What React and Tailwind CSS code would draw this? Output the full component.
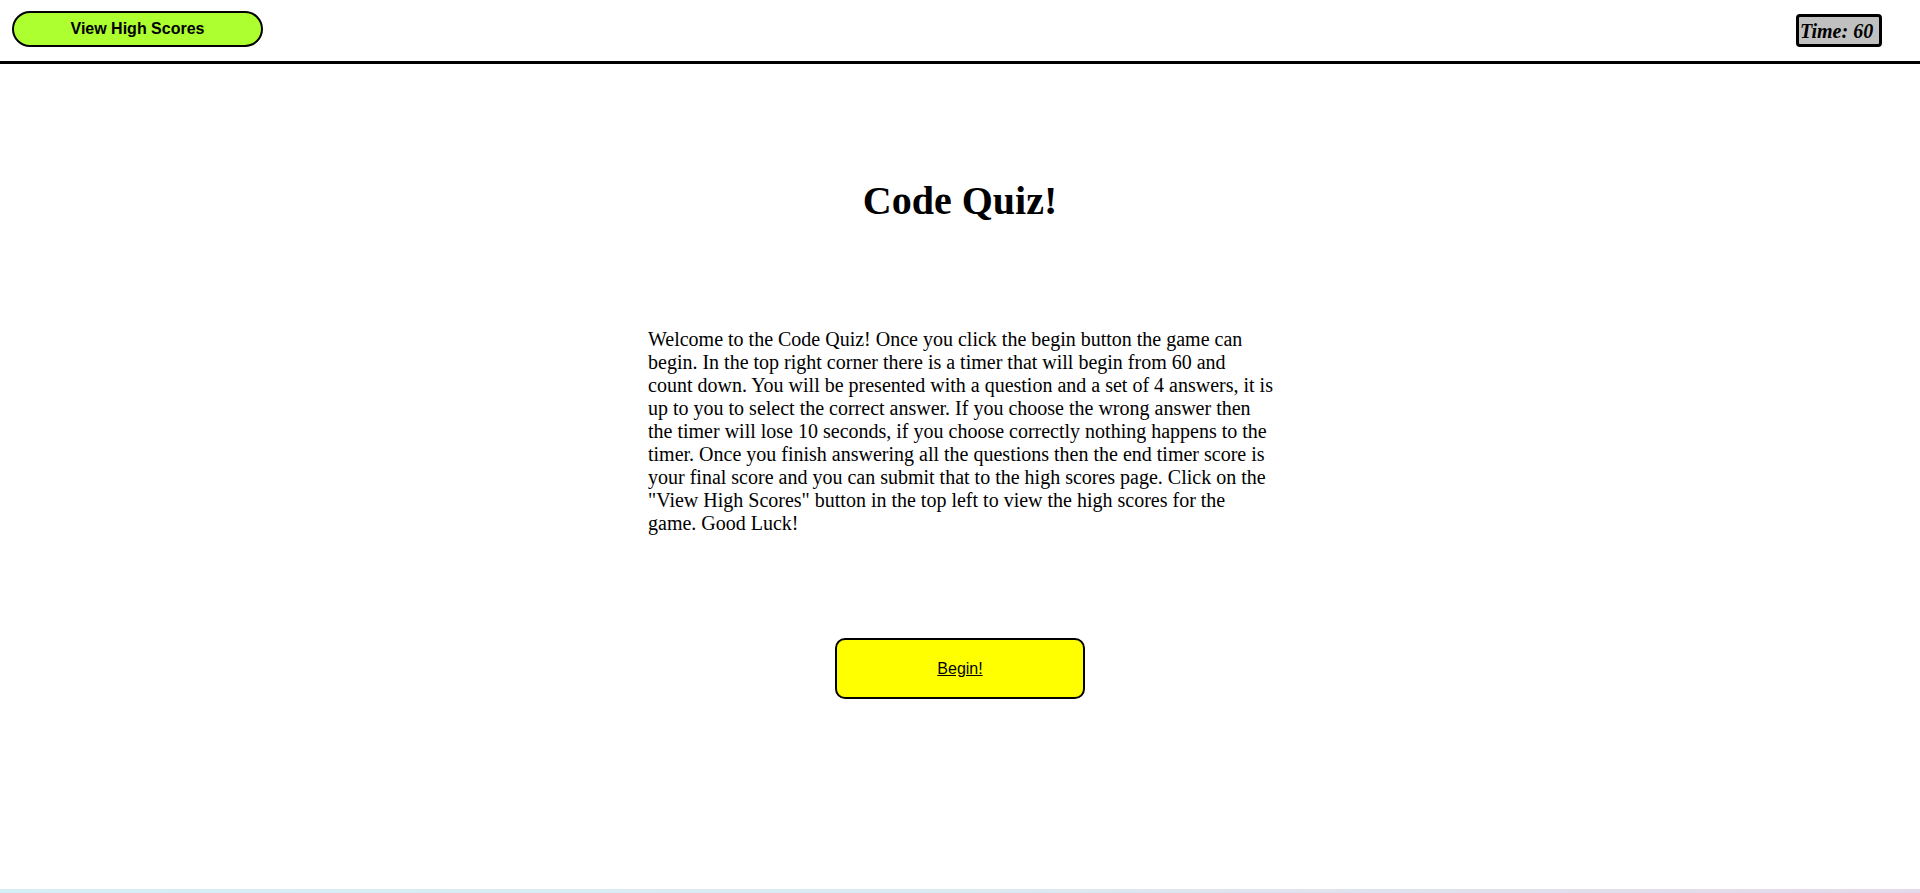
const intro = [
  'Welcome to the Code Quiz! Once you click the begin button the game can',
  'begin. In the top right corner there is a timer that will begin from 60 and',
  'count down. You will be presented with a question and a set of 4 answers, it is',
  'up to you to select the correct answer. If you choose the wrong answer then',
  'the timer will lose 10 seconds, if you choose correctly nothing happens to the',
  'timer. Once you finish answering all the questions then the end timer score is',
  'your final score and you can submit that to the high scores page. Click on the',
  '"View High Scores" button in the top left to view the high scores for the',
  'game. Good Luck!',
];

export default function App() {
  return (
    <div className="flex min-h-[893px] flex-col bg-white text-black">
      <header className="flex h-[64px] items-start justify-between border-b-[3px] border-black pl-[12px] pr-[38px]">
        <button
          type="button"
          className="mt-[11px] h-[36px] w-[251px] rounded-full border-2 border-black bg-[#adff2f] text-[16px] font-bold text-black"
          style={{ fontFamily: '"Liberation Sans", Arial, sans-serif' }}
        >
          View High Scores
        </button>
        <div
          className="mt-[14px] flex h-[33px] w-[86px] items-center rounded-[4px] border-[3px] border-black bg-[#c0c0c0] pl-[1px] text-[20px] font-bold italic"
          style={{ fontFamily: '"Liberation Serif", "Times New Roman", serif' }}
        >
          Time: 60
        </div>
      </header>

      <main
        className="flex flex-col items-center"
        style={{ fontFamily: '"Liberation Serif", "Times New Roman", serif' }}
      >
        <h1 className="mt-[114px] text-[40px] font-bold leading-[46px]">Code Quiz!</h1>

        <div className="mt-[104px] w-[656px] pl-4">
          <p className="whitespace-nowrap text-[20px] leading-[23px]">
            {intro.map((line, i) => (
              <span key={i} className="block">
                {line}
              </span>
            ))}
          </p>
        </div>

        <button
          type="button"
          className="mt-[103px] h-[61px] w-[250px] rounded-[10px] border-2 border-black bg-[#ffff00] text-[16px] text-black underline"
          style={{ fontFamily: '"Liberation Sans", Arial, sans-serif' }}
        >
          Begin!
        </button>
      </main>

      <div className="mt-auto h-[4px] w-full bg-gradient-to-r from-[#d6eef6] via-[#dceaf2] to-[#e4d9ea]" />
    </div>
  );
}
